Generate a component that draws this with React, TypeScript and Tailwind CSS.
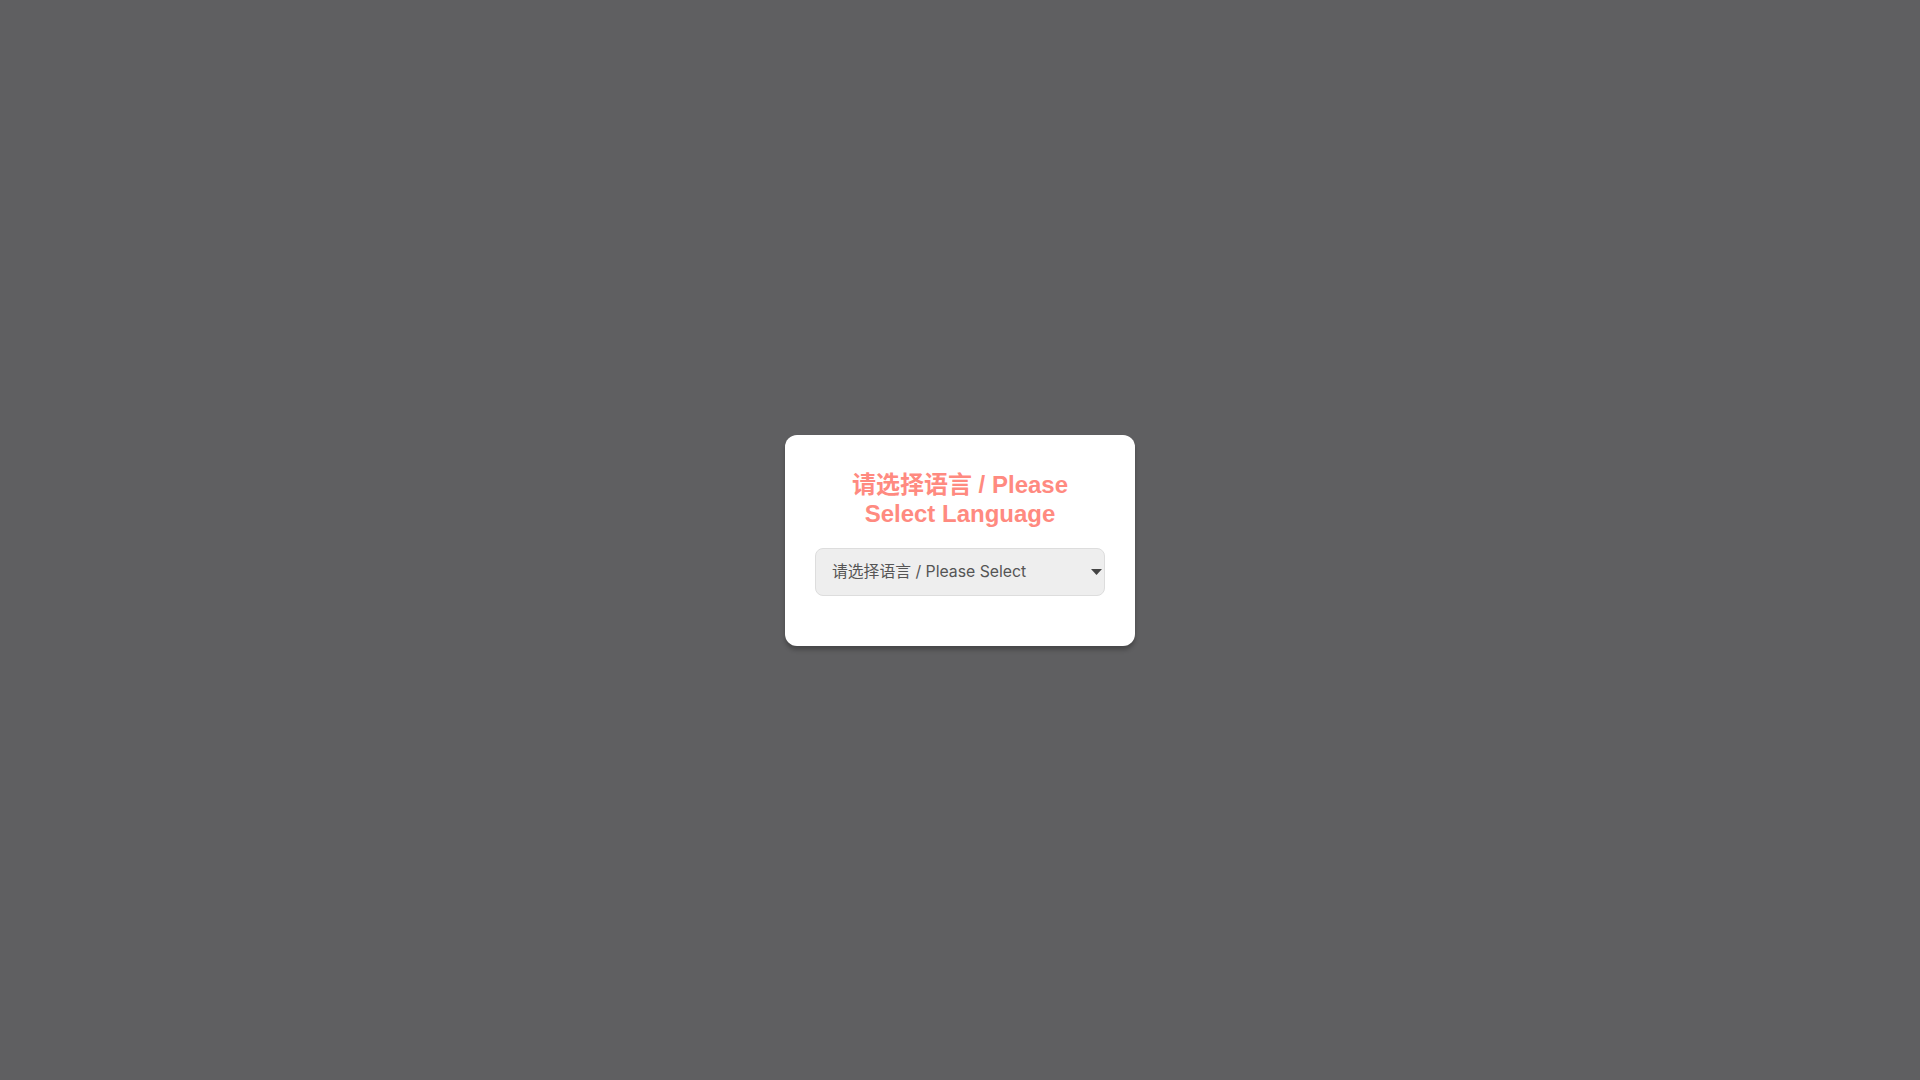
import React from 'react';

export default function App() {
  return (
    <div className="w-full h-screen bg-[#5f5f61] flex items-center justify-center font-['Inter','Noto_Sans_CJK_SC',sans-serif]">
      <div className="w-[350px] bg-white rounded-xl p-[30px] shadow-[0_4px_4px_rgba(0,0,0,0.25)] text-center">
        <h2 className="mt-[5px] mb-[20px] text-[24px] leading-[29px] font-bold text-[#ff8a80] font-['Liberation_Sans','Noto_Sans_CJK_SC',sans-serif]">
          请选择语言 / Please Select Language
        </h2>
        <div className="relative mb-[20px]">
          <select
            defaultValue=""
            className="block w-full h-[48px] appearance-none pl-[16px] pr-[24px] pt-[1px] text-[15.8px] text-[#555] bg-[#eeeeee] border border-[#dddddd] rounded-lg outline-none"
          >
            <option value="" disabled>
              请选择语言 / Please Select
            </option>
            <option value="zh">简体中文</option>
            <option value="en">English</option>
          </select>
          {/* dropdown caret */}
          <svg
            className="pointer-events-none absolute right-[3px] top-1/2 -translate-y-1/2"
            width="11"
            height="6"
            viewBox="0 0 11 6"
          >
            <path d="M0 0H11L5.5 6Z" fill="#444" />
          </svg>
        </div>
      </div>
    </div>
  );
}
